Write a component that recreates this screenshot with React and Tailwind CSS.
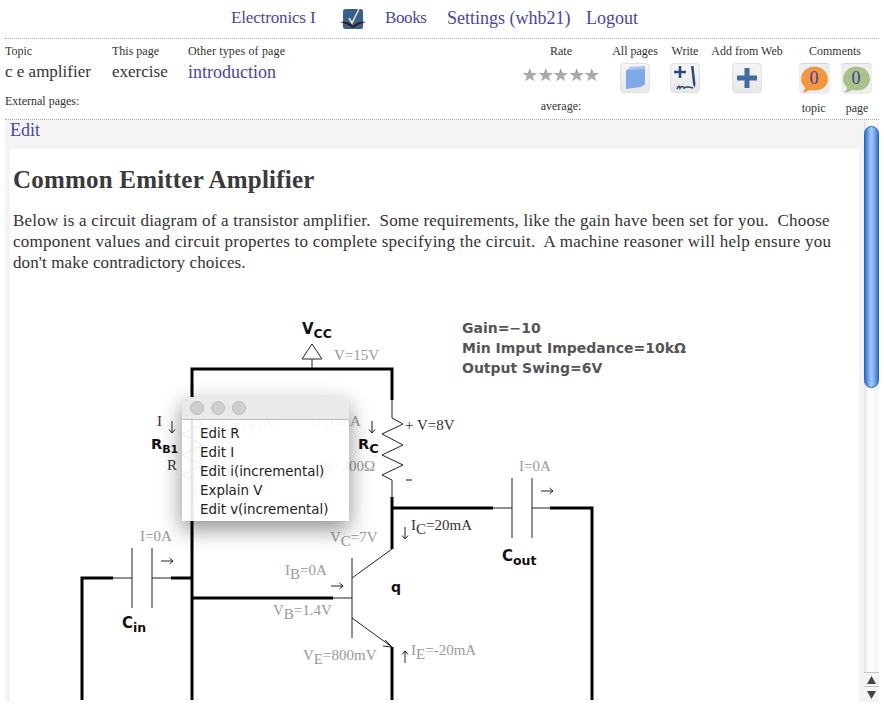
import React from "react";

const navLink = "text-[#4646a8]";

function Logo() {
  return (
    <svg width="26" height="22" viewBox="0 0 26 22">
      <rect x="3" y="1" width="20" height="20" rx="2.5" fill="#35608f" />
      <path d="M9 10 L12 15 L19 1" fill="none" stroke="#e8e6a8" strokeWidth="1.6" />
      <path d="M0 14 Q8 13 13 18 Q18 13 26 14 Q18 16 13 20 Q8 16 0 14Z" fill="#3a1512" />
    </svg>
  );
}

function Tile({ children }) {
  return (
    <div className="w-[30px] h-[30px] rounded-[4px] border border-[#e2e2e2] bg-[linear-gradient(#f5f5f5,#e8e8e8)] flex items-center justify-center">
      {children}
    </div>
  );
}

function Star() {
  return (
    <svg width="15.5" height="15" viewBox="0 0 16 15">
      <polygon points="8,1 10,6 15.5,6 11,9.3 12.8,14.5 8,11.3 3.2,14.5 5,9.3 0.5,6 6,6" fill="#a9a9a9" />
    </svg>
  );
}

function Bubble({ color, edge }) {
  return (
    <div className="relative w-[31px] h-[31px] rounded-[4px] bg-[#eeeeee] border-t border-[#c9d6ea]">
      <svg className="absolute left-0 top-0" width="31" height="31" viewBox="0 0 31 31">
        <path d="M15.5 3 C23 3 28.5 8 28.5 15 C28.5 22 23 26 16 26 C14 26 12.5 26 11 25.5 C9 27 6 28 4 28 C6 26.5 6.5 25 6.5 23.5 C4 21 2.5 18.5 2.5 15 C2.5 8 8 3 15.5 3Z" fill={color} stroke={edge} strokeWidth="0.5" />
      </svg>
      <span className="absolute inset-0 text-center text-[18px] leading-[29px] text-[#3c3cb4]">0</span>
    </div>
  );
}

function Col({ w, label, children }) {
  return (
    <div className={`${w} flex flex-col items-center`}>
      <div className="h-[17px] text-[12px] leading-[17px] whitespace-nowrap">{label}</div>
      {children}
    </div>
  );
}

const G = "#999999";
const D = "#333333";

function Serif({ x, y, fill = G, size = 15, children }) {
  return (
    <text x={x} y={y} fill={fill} fontSize={size} fontFamily="Liberation Serif, serif">
      {children}
    </text>
  );
}

function SansBold({ x, y, size = 14, fill = "#111", children }) {
  return (
    <text x={x} y={y} fill={fill} fontSize={size} fontWeight="bold" fontFamily="DejaVu Sans, sans-serif">
      {children}
    </text>
  );
}

function Arrow({ x, y, dir }) {
  const paths = {
    down: "M0 -6 V6 M-3 2.5 L0 6 L3 2.5",
    up: "M0 -6 V6 M-3 -2.5 L0 -6 L3 -2.5",
    right: "M-6 0 H6 M2.5 -3 L6 0 L2.5 3",
  };
  return <path transform={`translate(${x} ${y})`} d={paths[dir]} fill="none" stroke="#222" strokeWidth="1" />;
}

function Circuit() {
  return (
    <svg className="block" width="849" height="402" viewBox="10 300 849 402">
      {/* thick wires */}
      <g fill="none" stroke="#000" strokeWidth="3">
        <path d="M192 700 V369 H392 V400" />
        <path d="M392 497 V549" />
        <path d="M392 508 H493" />
        <path d="M550 508 H592 V700" />
        <path d="M82 700 V578 H113" />
        <path d="M171 578 H192" />
        <path d="M192 598 H333" />
        <path d="M392 647 V700" />
      </g>
      {/* thin wires and parts */}
      <g fill="none" stroke="#222" strokeWidth="1">
        <path d="M312 344 L302 359 H322 Z M312 359 V368" />
        <path d="M392 400 V418 L403 424 L382 434 L403 445 L382 455 L403 465 L382 475 L392 480 V497" />
        <path d="M192 400 V418 L203 424 L182 434 L203 445 L182 455 L203 465 L182 475 L192 480 V497" />
        <path d="M493 508 H512 M512 478 V538 M532 478 V538 M532 508 H550" />
        <path d="M113 578 H132 M132 548 V608 M152 548 V608 M152 578 H171" />
        <path d="M333 598 H352 M352 558 V638" />
        <path d="M352 578 L392 549" />
        <path d="M352 618 L392 647 M385 640 L392 647 L383 646" />
      </g>

      <SansBold x={302} y={334} size={15}>V<tspan dy="4" fontSize="12.5">CC</tspan></SansBold>
      <Serif x={334} y={360}>V=15V</Serif>

      <g fontSize="14" fontWeight="bold" fontFamily="DejaVu Sans, sans-serif" fill="#555555">
        <text x={462} y={333}>Gain=−10</text>
        <text x={462} y={353}>Min Imput Impedance=10kΩ</text>
        <text x={462} y={373}>Output Swing=6V</text>
      </g>

      <Serif x={157} y={426} fill={D}>I</Serif>
      <Arrow x={172} y={427} dir="down" />
      <SansBold x={151} y={449} size={14.5}>R<tspan dy="4" fontSize="11">B1</tspan></SansBold>
      <Serif x={167} y={470} fill={D}>R</Serif>
      <Serif x={208} y={430} fill={G}>+ V=13.6V</Serif>
      <Serif x={310} y={426} fill={G}>I=20mA</Serif>
      <Arrow x={372} y={427} dir="down" />
      <SansBold x={358} y={449} size={14.5}>R<tspan dy="4" fontSize="13">C</tspan></SansBold>
      <Serif x={323} y={471} fill={G}>R=400Ω</Serif>
      <Serif x={405} y={430} fill={D}>+ V=8V</Serif>
      <path d="M406 480 H412" stroke="#333" strokeWidth="1.2" />

      <Serif x={519} y={471}>I=0A</Serif>
      <Arrow x={547} y={491} dir="right" />
      <SansBold x={502} y={561} size={15}>C<tspan dy="4" fontSize="12.5">out</tspan></SansBold>
      <Arrow x={405} y={533} dir="down" />
      <Serif x={411} y={530} fill={D}>I<tspan dy="4">C</tspan><tspan dy="-4">=20mA</tspan></Serif>

      <Serif x={140} y={541}>I=0A</Serif>
      <Arrow x={167} y={561} dir="right" />
      <SansBold x={122} y={628} size={15}>C<tspan dy="4" fontSize="12.5">in</tspan></SansBold>

      <Serif x={330} y={542}>V<tspan dy="4">C</tspan><tspan dy="-4">=7V</tspan></Serif>
      <Serif x={285} y={575}>I<tspan dy="4">B</tspan><tspan dy="-4">=0A</tspan></Serif>
      <Arrow x={337} y={586} dir="right" />
      <Serif x={273} y={615}>V<tspan dy="4">B</tspan><tspan dy="-4">=1.4V</tspan></Serif>
      <SansBold x={391} y={592} size={14}>q</SansBold>
      <Serif x={303} y={660}>V<tspan dy="4">E</tspan><tspan dy="-4">=800mV</tspan></Serif>
      <Arrow x={405} y={657} dir="up" />
      <Serif x={411} y={655}>I<tspan dy="4">E</tspan><tspan dy="-4">=-20mA</tspan></Serif>
    </svg>
  );
}

function Popup() {
  return (
    <div className="absolute left-[172px] top-[277px] w-[167px] h-[124px] rounded-t-[4px] bg-white/90 shadow-[0_8px_22px_rgba(0,0,0,0.45)]">
      <div className="h-[23px] rounded-t-[4px] bg-[#e8e8e8]/90 border-b border-[#bdbdbd] flex items-center gap-[7px] pl-[8px]">
        <span className="w-[14px] h-[14px] rounded-full bg-[#cfcfcf] border border-[#bcbcbc]" />
        <span className="w-[14px] h-[14px] rounded-full bg-[#cfcfcf] border border-[#bcbcbc]" />
        <span className="w-[14px] h-[14px] rounded-full bg-[#cfcfcf] border border-[#bcbcbc]" />
      </div>
      <ul className="pl-[18px] pt-[4px] font-['DejaVu_Sans',sans-serif] text-[13.4px] leading-[19px] text-[#222]">
        <li>Edit R</li>
        <li>Edit I</li>
        <li>Edit i(incremental)</li>
        <li>Explain V</li>
        <li>Edit v(incremental)</li>
      </ul>
    </div>
  );
}

function Scrollbar() {
  return (
    <div className="w-[15px] flex flex-col bg-[linear-gradient(to_right,#e6e6e6,#ffffff_35%,#f4f4f4)]">
      <div className="h-[6px]" />
      <div className="h-[262px] rounded-full border border-[#2a62c4] bg-[linear-gradient(to_right,#2f72dc,#a8c8f2_45%,#7fb0ee_70%,#2f72dc)]" />
      <div className="flex-1" />
      <div className="h-[14px] flex items-center justify-center border-t border-[#c4c4c4] bg-[#f4f4f4]">
        <svg width="9" height="8" viewBox="0 0 9 8"><path d="M4.5 0 L9 8 H0Z" fill="#444" /></svg>
      </div>
      <div className="h-[16px] flex items-center justify-center border-t border-[#c4c4c4] bg-[#f4f4f4]">
        <svg width="9" height="8" viewBox="0 0 9 8"><path d="M4.5 8 L9 0 H0Z" fill="#444" /></svg>
      </div>
    </div>
  );
}

export default function App() {
  return (
    <div className="w-[884px] h-[710px] overflow-hidden bg-white text-[#333] font-['Liberation_Serif',serif] pl-[5px] pr-[5px]">
      {/* top nav */}
      <nav className="h-[38px] pt-[6px] flex items-start pl-[226px] text-[18px] leading-[24px]">
        <a className={`${navLink} w-[109px] text-[17px] tracking-[-0.15px]`}>Electronics I</a>
        <div className="w-[45px] pt-[2px]"><Logo /></div>
        <a className={`${navLink} w-[62px] text-[17px] tracking-[-0.4px]`}>Books</a>
        <a className={`${navLink} w-[139px]`}>Settings (whb21)</a>
        <a className={navLink}>Logout</a>
      </nav>

      {/* page info */}
      <header className="h-[82px] border-y border-dotted border-[#aaa] flex justify-between pt-[4px]">
        <div>
          <div className="flex">
            <div className="w-[107px]">
              <div className="text-[12px] leading-[17px]">Topic</div>
              <div className="text-[17px] leading-[24px]">c e amplifier</div>
            </div>
            <div className="w-[76px]">
              <div className="text-[12px] leading-[17px]">This page</div>
              <div className="text-[17px] leading-[24px]">exercise</div>
            </div>
            <div>
              <div className="text-[12px] leading-[17px] tracking-[0.15px]">Other types of page</div>
              <div className="text-[18px] leading-[24px] text-[#4646a8]">introduction</div>
            </div>
          </div>
          <div className="text-[12px] leading-[17px] mt-[9px]">External pages:</div>
        </div>

        <div className="flex">
          <Col w="w-[96px]" label="Rate">
            <div className="flex mt-[7px] h-[15px]">
              <Star /><Star /><Star /><Star /><Star />
            </div>
            <div className="text-[12px] leading-[17px] mt-[16px]">average:</div>
          </Col>
          <Col w="w-[52px]" label="All pages">
            <div className="mt-[3px]">
              <Tile>
                <svg width="22" height="24" viewBox="0 0 22 24">
                  <path d="M4 3 L21 1 V18 L17 21 L2 23 V5Z" fill="#7fa8e8" />
                  <path d="M5 1 L21 0 V3 L5 4Z" fill="#a8c4f0" />
                </svg>
              </Tile>
            </div>
          </Col>
          <Col w="w-[48px]" label="Write">
            <div className="mt-[3px]">
              <Tile>
                <svg width="28" height="28" viewBox="0 0 28 28">
                  <path d="M9 2 V14 M3 8 H15" stroke="#2c4a72" strokeWidth="2.5" fill="none" />
                  <path d="M20 2 L22 20 L23.5 24 L24.5 20 L22.5 2Z" fill="#2c4a72" />
                  <path d="M6 25 Q8 20 9 24 Q11 21 13 24 Q16 22 22 24" stroke="#2c4a72" strokeWidth="1.6" fill="none" />
                </svg>
              </Tile>
            </div>
          </Col>
          <Col w="w-[76px] mr-[6px]" label="Add from Web">
            <div className="mt-[3px]">
              <Tile>
                <svg width="22" height="22" viewBox="0 0 22 22">
                  <path d="M11 1 V21 M1 11 H21" stroke="#3f6ca4" strokeWidth="5" fill="none" />
                </svg>
              </Tile>
            </div>
          </Col>
          <div className="w-[88px] flex flex-col items-center">
            <div className="h-[17px] text-[12px] leading-[17px]">Comments</div>
            <div className="flex gap-[11px] mt-[3px]">
              <Bubble color="#f4973a" edge="#d87c20" />
              <Bubble color="#a9c285" edge="#8fa86c" />
            </div>
            <div className="flex gap-[20px] text-[12px] leading-[17px] mt-[6px]">
              <span>topic</span>
              <span>page</span>
            </div>
          </div>
        </div>
      </header>

      {/* page body */}
      <div className="flex h-[582px]">
        <main className="relative flex-1 border-x-[5px] border-[#f4f4f4] overflow-hidden">
          <div className="h-[29px] bg-[#f4f4f4] text-[18px] leading-[20px] text-[#4646a8]">Edit</div>
          <div className="pl-[3px]">
            <h1 className="text-[25px] leading-[30px] font-bold mt-[16px] tracking-[0.2px] text-[#3a3a3a]">Common Emitter Amplifier</h1>
            <p className="text-[17px] leading-[21px] mt-[15px] whitespace-nowrap">
              <span className="block tracking-[0.2px]">Below is a circuit diagram of a transistor amplifier.&nbsp; Some requirements, like the gain have been set for you.&nbsp; Choose</span>
              <span className="block tracking-[0.26px]">component values and circuit propertes to complete specifying the circuit.&nbsp; A machine reasoner will help ensure you</span>
              <span className="block tracking-[0.12px]">don't make contradictory choices.</span>
            </p>
          </div>
          <div className="absolute left-0 top-[180px]">
            <Circuit />
          </div>
          <Popup />
        </main>
        <Scrollbar />
      </div>
    </div>
  );
}
